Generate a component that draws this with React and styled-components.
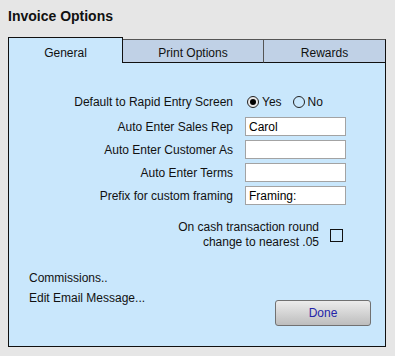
import React, { useState } from 'react'
import styled, { createGlobalStyle } from 'styled-components'

const cPage = '#e6e6e6'
const cPanel = '#c9e7fc'
const cTab = '#c0d1e6'
const cBorder = '#111'

const GlobalStyle = createGlobalStyle`
  html, body {
    margin: 0;
    padding: 0;
    background: ${cPage};
  }
  body {
    width: 395px;
    height: 356px;
    overflow: hidden;
    font-family: "Liberation Sans", Arial, sans-serif;
    font-size: 12px;
    color: #111;
  }
  * {
    box-sizing: border-box;
  }
`

const Window = styled.div`
  padding: 8px 0 0 8px;
`

const Title = styled.h1`
  margin: 0 0 12px;
  font-size: 14px;
  font-weight: bold;
  line-height: 17px;
  color: #111;
`

const TabBar = styled.div`
  display: flex;
  align-items: flex-end;
  width: 378px;
`

const Tab = styled.div`
  display: flex;
  align-items: flex-end;
  justify-content: center;
  width: ${p => p.$width}px;
  line-height: 14px;
  color: #111;
  cursor: pointer;
  ${p => p.$active ? `
    height: 26px;
    padding-bottom: 3px;
    background: ${cPanel};
    border: 1px solid ${cBorder};
    border-bottom: none;
  ` : `
    height: 24px;
    padding-bottom: 2px;
    background: ${cTab};
    border-top: 1px solid #555;
    border-right: 1px solid #555;
    border-bottom: 1px solid ${cBorder};
  `}
  ${p => p.$last && `border-right-color: ${cBorder};`}
`

const Panel = styled.div`
  width: 378px;
  background: ${cPanel};
  border: 1px solid ${cBorder};
  border-top: none;
  padding: 29px 0 20px;
`

const Form = styled.div`
  display: flex;
  flex-direction: column;
  gap: 4px;
`

const Row = styled.div`
  display: grid;
  grid-template-columns: 224px 1fr;
  column-gap: 12px;
  align-items: center;
  height: 19px;
  line-height: 14px;
  margin-bottom: ${p => (p.$spaced ? 2 : 0)}px;
`

const Label = styled.label`
  text-align: right;
  white-space: nowrap;
`

const TextInput = styled.input`
  width: 101px;
  height: 19px;
  margin: 0;
  padding: 0 3px;
  border: 1px solid #a3a3a3;
  background: #fff;
  font-family: inherit;
  font-size: 12px;
  color: #000;
  outline: none;
`

const RadioGroup = styled.div`
  display: flex;
  align-items: center;
  gap: 11px;
  padding-left: 2px;
`

const RadioOption = styled.label`
  display: flex;
  align-items: center;
  gap: 3px;
  cursor: pointer;
`

const RadioDot = styled.span`
  position: relative;
  width: 12px;
  height: 12px;
  border-radius: 50%;
  border: 1px solid #222;
  background: ${p => (p.$checked ? '#e8e8e8' : 'transparent')};

  &::after {
    content: '';
    display: ${p => (p.$checked ? 'block' : 'none')};
    position: absolute;
    left: 2px;
    top: 2px;
    width: 6px;
    height: 6px;
    border-radius: 50%;
    background: #000;
  }
`

const CashRow = styled.div`
  display: flex;
  justify-content: flex-end;
  align-items: center;
  gap: 11px;
  margin-top: 15px;
  padding-right: 42px;
`

const CashText = styled.div`
  text-align: right;
  line-height: 15px;
`

const CheckBox = styled.span`
  width: 13px;
  height: 13px;
  border: 1.5px solid #111;
  cursor: pointer;
`

const Bottom = styled.div`
  display: flex;
  justify-content: space-between;
  align-items: flex-start;
  margin-top: 18px;
  padding: 0 14px 0 20px;
`

const Links = styled.div`
  display: flex;
  flex-direction: column;
  line-height: 20px;
`

const LinkItem = styled.a`
  color: #111;
  text-decoration: none;
  cursor: pointer;
`

const Button = styled.button`
  width: 96px;
  height: 26px;
  margin-top: 32px;
  border: 1px solid #717171;
  border-radius: 3px;
  background: linear-gradient(#ececec, #bdbdbd);
  font-family: inherit;
  font-size: 12px;
  color: #2424a8;
  cursor: pointer;
`

const tabs = [
  { name: 'General', width: 115 },
  { name: 'Print Options', width: 141 },
  { name: 'Rewards', width: 122 },
]

export default function App() {
  const [rapid, setRapid] = useState('yes')
  const [round, setRound] = useState(false)

  return (
    <Window>
      <GlobalStyle />
      <Title>Invoice Options</Title>
      <TabBar>
        {tabs.map((t, i) => (
          <Tab key={t.name} $width={t.width} $active={i === 0} $last={i === tabs.length - 1}>
            {t.name}
          </Tab>
        ))}
      </TabBar>
      <Panel>
        <Form>
          <Row $spaced>
            <Label>Default to Rapid Entry Screen</Label>
            <RadioGroup>
              <RadioOption onClick={() => setRapid('yes')}>
                <RadioDot $checked={rapid === 'yes'} />Yes
              </RadioOption>
              <RadioOption onClick={() => setRapid('no')}>
                <RadioDot $checked={rapid === 'no'} />No
              </RadioOption>
            </RadioGroup>
          </Row>
          <Row>
            <Label>Auto Enter Sales Rep</Label>
            <TextInput defaultValue="Carol" />
          </Row>
          <Row>
            <Label>Auto Enter Customer As</Label>
            <TextInput />
          </Row>
          <Row>
            <Label>Auto Enter Terms</Label>
            <TextInput />
          </Row>
          <Row>
            <Label>Prefix for custom framing</Label>
            <TextInput defaultValue="Framing:" />
          </Row>
        </Form>
        <CashRow>
          <CashText>
            On cash transaction round<br />change to nearest .05
          </CashText>
          <CheckBox onClick={() => setRound(!round)} />
        </CashRow>
        <Bottom>
          <Links>
            <LinkItem>Commissions..</LinkItem>
            <LinkItem>Edit Email Message...</LinkItem>
          </Links>
          <Button>Done</Button>
        </Bottom>
      </Panel>
    </Window>
  )
}
